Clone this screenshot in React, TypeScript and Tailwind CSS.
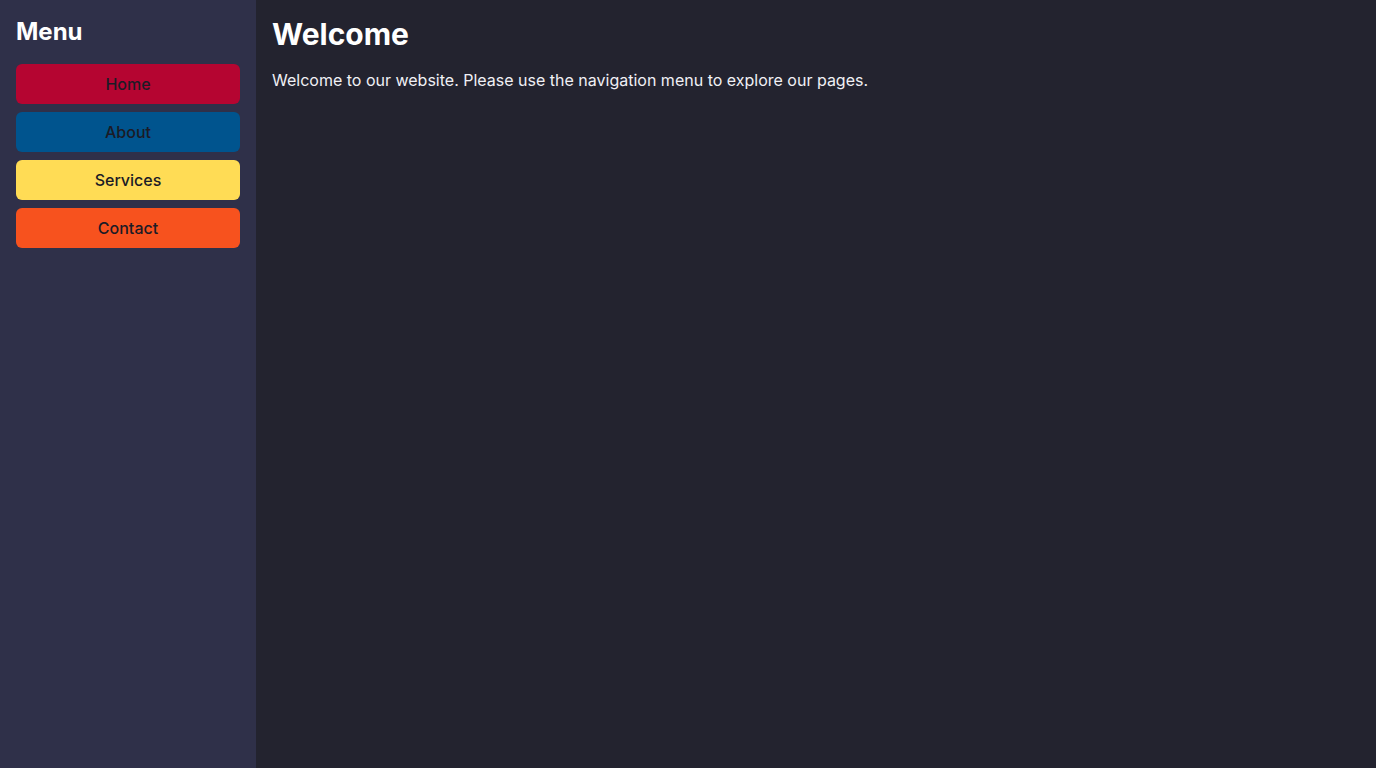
import React from "react";

const items = [
  { label: "Home", cls: "bg-[#b50531]" },
  { label: "About", cls: "bg-[#00548e]" },
  { label: "Services", cls: "bg-[#ffdc55]" },
  { label: "Contact", cls: "bg-[#f7521e]" },
];

export default function App() {
  return (
    <div
      className="flex h-[768px] w-full"
      style={{ fontFamily: "Inter, 'Noto Sans', sans-serif" }}
    >
      <aside className="w-[256px] shrink-0 bg-[#2f3049] p-4">
        <h2 className="text-2xl font-bold leading-8 text-white">Menu</h2>
        <nav className="mt-4 flex flex-col gap-2">
          {items.map((it) => (
            <button
              key={it.label}
              className={`h-10 w-full rounded-md text-base font-medium text-[#1b1b26] ${it.cls}`}
            >
              {it.label}
            </button>
          ))}
        </nav>
      </aside>
      <main className="flex-1 bg-[#23232f] p-4">
        <h1 className="text-3xl font-bold leading-9 text-white">Welcome</h1>
        <p className="mt-4 text-base text-[#f0f0f5]">
          Welcome to our website. Please use the navigation menu to explore our pages.
        </p>
      </main>
    </div>
  );
}
